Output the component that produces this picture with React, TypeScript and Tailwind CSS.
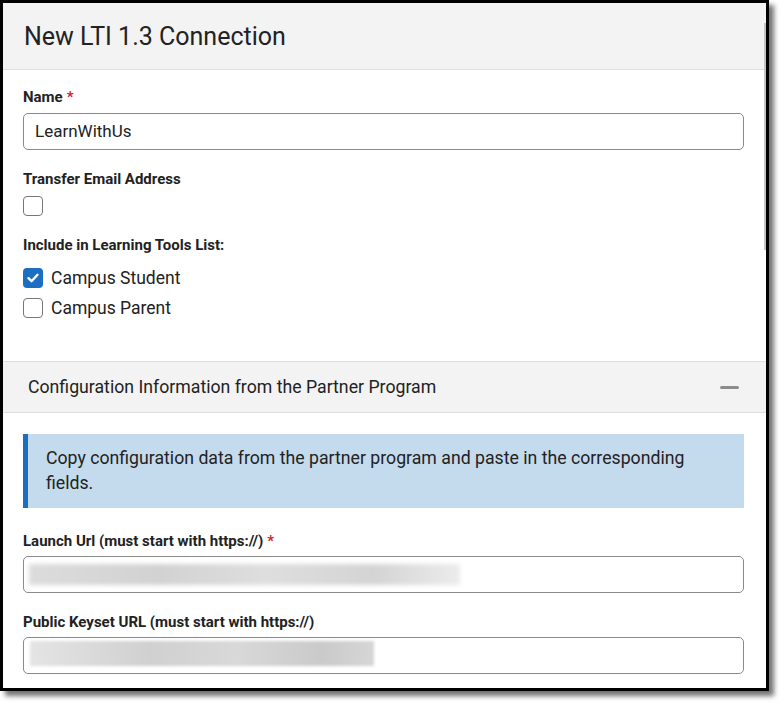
// New LTI 1.3 Connection - editor panel screenshot

function Checkbox({ checked = false }: { checked?: boolean }) {
  if (checked) {
    return (
      <span className="flex h-[20px] w-[20px] shrink-0 items-center justify-center rounded-[4px] bg-[#1b6ec2]">
        <svg width="14" height="14" viewBox="0 0 14 14" fill="none">
          <path d="M2.5 7.2l3 3 6-6.4" stroke="#fff" strokeWidth="2.4" strokeLinecap="round" strokeLinejoin="round" />
        </svg>
      </span>
    );
  }
  return <span className="block h-[20px] w-[20px] shrink-0 rounded-[4px] border border-[#777] bg-white" />;
}

function Label({ text, required = false }: { text: string; required?: boolean }) {
  return (
    <div className="text-[15px] font-bold leading-[20px] text-[#222]">
      {text}
      {required && <span className="ml-1 text-[#d0252b]">*</span>}
    </div>
  );
}

export default function App() {
  return (
    <div className="h-[706px] w-[784px] bg-white" style={{ fontFamily: "Roboto, 'Noto Sans', sans-serif" }}>
      <div className="relative h-[691px] w-[769px] overflow-hidden border-[3px] border-black bg-white shadow-[5px_5px_5px_rgba(0,0,0,0.55)]">

        {/* scrollbar thumb */}
        <div className="absolute right-0 top-[20px] h-[227px] w-[2px] bg-[#c4c4c4]" />

        {/* Header */}
        <div className="flex h-[67px] items-center border-b border-[#dddddd] bg-[#f3f3f3] pl-[21px]">
          <h1 className="text-[25px] leading-none text-[#222]">New LTI 1.3 Connection</h1>
        </div>

        {/* General fields */}
        <div className="pl-[20px] pr-[22px] pt-[17px]">
          <Label text="Name" required />
          <div className="mt-[6px] flex h-[37px] items-center rounded-[5px] border border-[#8a8a8a] px-[11px] text-[17px] text-[#222]">
            LearnWithUs
          </div>

          <div className="mt-[19px]">
            <Label text="Transfer Email Address" />
          </div>
          <div className="mt-[7px]">
            <Checkbox />
          </div>

          <div className="mt-[19px]">
            <Label text="Include in Learning Tools List:" />
          </div>
          <div className="mt-[13px] flex flex-col gap-[10px]">
            <label className="flex h-[20px] items-center gap-[8px] text-[17.5px] text-[#222]">
              <Checkbox checked />
              Campus Student
            </label>
            <label className="flex h-[20px] items-center gap-[8px] text-[17.5px] text-[#222]">
              <Checkbox />
              Campus Parent
            </label>
          </div>
        </div>

        {/* Configuration section */}
        <div className="mt-[43px] flex h-[52px] items-center justify-between border-y border-[#dddddd] bg-[#f3f3f3] pl-[25px] pr-[27px]">
          <span className="text-[17.7px] text-[#222]">Configuration Information from the Partner Program</span>
          <span className="block h-[3px] w-[19px] rounded-full bg-[#8c8c8c]" />
        </div>

        <div className="pl-[20px] pr-[22px] pt-[21px]">
          <div className="border-l-[5px] border-[#1b6ec2] bg-[#c4dbee] py-[12px] pl-[18px] pr-4 text-[17.7px] leading-[25px] text-[#222]">
            Copy configuration data from the partner program and paste in the corresponding
            <br />
            fields.
          </div>

          <div className="mt-[23px]">
            <Label text="Launch Url (must start with https://)" required />
          </div>
          <div className="mt-[5px] flex h-[37px] items-center overflow-hidden rounded-[5px] border border-[#8a8a8a] px-[5px]">
            <div className="h-[21px] w-[431px] bg-[linear-gradient(90deg,#dcdcdc,#d2d2d2_30%,#dedede_55%,#d4d4d4_80%,#ececec)] blur-[2px]" />
          </div>

          <div className="mt-[19px]">
            <Label text="Public Keyset URL (must start with https://)" />
          </div>
          <div className="mt-[5px] flex h-[37px] items-start overflow-hidden rounded-[5px] border border-[#8a8a8a] px-[6px] pt-[3px]">
            <div className="h-[25px] w-[344px] bg-[linear-gradient(90deg,#e4e4e4,#d0d0d0_35%,#d8d8d8_60%,#cacaca_85%,#d6d6d6)] blur-[1.5px]" />
          </div>
        </div>
      </div>
    </div>
  );
}
